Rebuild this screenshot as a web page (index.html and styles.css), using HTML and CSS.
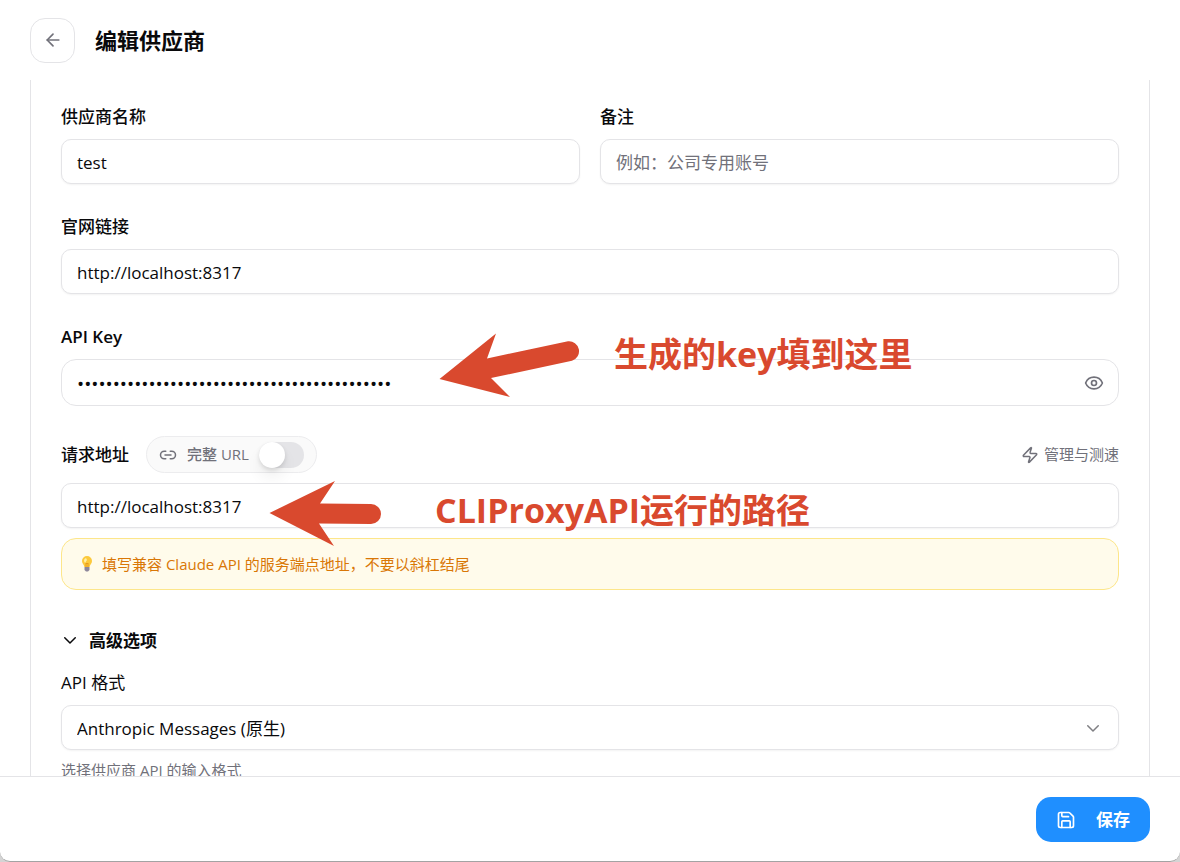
FILE: index.html
```html
<!DOCTYPE html>
<html lang="zh-CN">
<head>
    <meta charset="UTF-8">
    <meta name="viewport" content="width=device-width, initial-scale=1.0">
    <title>编辑供应商</title>
    <link rel="stylesheet" href="styles.css">
</head>
<body>

    <div class="window">
        <header class="header">
            <button type="button" class="btn-back" aria-label="返回">
                <svg class="icon" width="20" height="20" viewBox="0 0 24 24"><path d="m12 19-7-7 7-7"/><path d="M19 12H5"/></svg>
            </button>
            <h1>编辑供应商</h1>
        </header>

        <main class="content">
            <form class="card" id="provider-form">
                <div class="row">
                    <div class="field">
                        <label for="name">供应商名称</label>
                        <input class="input" type="text" id="name" value="test">
                    </div>
                    <div class="field">
                        <label for="notes">备注</label>
                        <input class="input" type="text" id="notes" placeholder="例如：公司专用账号">
                    </div>
                </div>

                <div class="field">
                    <label for="website">官网链接</label>
                    <input class="input" type="text" id="website" value="http://localhost:8317">
                </div>

                <div class="field">
                    <label class="strong" for="apikey">API Key</label>
                    <div class="control">
                        <input class="input input-key" type="password" id="apikey" value="sk-0123456789abcdefghijklmnopqrstuvwxyz01234">
                        <button type="button" class="btn-eye" aria-label="显示">
                            <svg class="icon" width="20" height="20" viewBox="0 0 24 24"><path d="M2.06 12.35a1 1 0 0 1 0-.7 10.75 10.75 0 0 1 19.88 0 1 1 0 0 1 0 .7 10.75 10.75 0 0 1-19.88 0"/><circle cx="12" cy="12" r="3"/></svg>
                        </button>
                        <svg class="arrow arrow-key" width="142" height="66" viewBox="0 0 142 66"><path d="M0.5 47 57 1.5 48 26.5 129 9.3A10 10 0 0 1 133 28.8L52 46 71 65Z"/></svg>
                        <span class="note note-key">生成的key填到这里</span>
                    </div>
                </div>

                <div class="field">
                    <div class="url-bar">
                        <label for="baseurl">请求地址</label>
                        <label class="pill">
                            <svg class="icon" width="18" height="18" viewBox="0 0 24 24"><path d="M9 17H7A5 5 0 0 1 7 7h2"/><path d="M15 7h2a5 5 0 1 1 0 10h-2"/><path d="M8 12h8"/></svg>
                            <span>完整 URL</span>
                            <input class="switch" type="checkbox">
                        </label>
                        <button type="button" class="btn-speed">
                            <svg class="icon" width="18" height="18" viewBox="0 0 24 24"><path d="M4 14a1 1 0 0 1-.78-1.63l9.9-10.2a.5.5 0 0 1 .86.46l-1.92 6.02A1 1 0 0 0 13 10h7a1 1 0 0 1 .78 1.63l-9.9 10.2a.5.5 0 0 1-.86-.46l1.92-6.02A1 1 0 0 0 11 14z"/></svg>
                            管理与测速
                        </button>
                    </div>
                    <div class="control">
                        <input class="input" type="text" id="baseurl" value="http://localhost:8317">
                        <svg class="arrow arrow-url" width="114" height="66" viewBox="0 0 114 66"><path d="M0.5 33 66 1 51 23.500 102 24A10 10 0 0 1 102 44L50 43.500 65 66Z"/></svg>
                        <span class="note note-url">CLIProxyAPI运行的路径</span>
                    </div>
                    <div class="tip">
                        <svg width="12" height="18" viewBox="0 0 12 18">
                            <path fill="#fcc93c" d="M6 1a5 5 0 0 0-5 5c0 2.600 2 3.500 2.400 6h5.200C9 9.500 11 8.600 11 6a5 5 0 0 0-5-5z"/>
                            <path fill="#fff0a8" d="M5 3a3 3 0 0 0-2 3l1 2 2-3z"/>
                            <path fill="none" stroke="#e89a1c" d="M5 12V8l1 1 1-1v4"/>
                            <path fill="#8d879b" d="M3.500 12h5v3L7 16.500H5L3.500 15z"/>
                        </svg>
                        <p>填写兼容 Claude API 的服务端点地址，不要以斜杠结尾</p>
                    </div>
                </div>

                <div class="advanced">
                    <button type="button" class="btn-advanced">
                        <svg class="icon" width="18" height="18" viewBox="0 0 24 24"><path d="m5 9 7 7 7-7"/></svg>
                        高级选项
                    </button>
                    <div class="field">
                        <label class="plain" for="format">API 格式</label>
                        <div class="control">
                            <select class="input" id="format">
                                <option>Anthropic Messages (原生)</option>
                            </select>
                            <svg class="icon chevron" width="18" height="18" viewBox="0 0 24 24"><path d="m5 9 7 7 7-7"/></svg>
                        </div>
                        <p class="hint">选择供应商 API 的输入格式</p>
                    </div>
                </div>
            </form>
        </main>

        <footer class="footer">
            <button type="submit" class="btn-save" form="provider-form">
                <svg class="icon" width="20" height="20" viewBox="0 0 24 24"><path d="M15.200 3a2 2 0 0 1 1.400.6l3.800 3.800a2 2 0 0 1 .6 1.400V19a2 2 0 0 1-2 2H5a2 2 0 0 1-2-2V5a2 2 0 0 1 2-2z"/><path d="M17 21v-7a1 1 0 0 0-1-1H8a1 1 0 0 0-1 1v7"/><path d="M7 3v4a1 1 0 0 0 1 1h7"/></svg>
                保存
            </button>
        </footer>
    </div>

</body>
</html>
```
FILE: styles.css
```css
* {
    margin: 0;
    padding: 0;
    box-sizing: border-box;
}
body {
    height: 100vh;
    background-color: #d4d4d4;
    font-family: "Open Sans", "Noto Sans CJK SC", sans-serif;
    font-size: 17px;
    line-height: 25px;
    color: #09090b;
}
button, input, select {
    font: inherit;
    color: inherit;
}
button {
    border: none;
    background: none;
    cursor: pointer;
}
.window {
    height: 100%;
    display: flex;
    flex-direction: column;
    background-color: #fff;
    border-bottom: 1px solid #a3a3a3;
    border-radius: 0 0 10px 10px;
    overflow: hidden;
}
.icon {
    flex-shrink: 0;
    fill: none;
    stroke: currentColor;
    stroke-width: 2;
    stroke-linecap: round;
    stroke-linejoin: round;
}

/* Header */
.header {
    height: 80px;
    flex-shrink: 0;
    display: flex;
    align-items: center;
    gap: 20px;
    padding: 0 30px;
}
.btn-back {
    width: 45px;
    height: 45px;
    display: flex;
    align-items: center;
    justify-content: center;
    border: 1px solid #e4e4e7;
    border-radius: 15px;
    color: #71717a;
}
h1 {
    font-size: 22px;
    line-height: 30px;
    font-weight: bold;
}

/* Form */
.content {
    flex: 1;
    min-height: 0;
    overflow: hidden;
    padding: 0 30px;
}
.card {
    display: flex;
    flex-direction: column;
    gap: 30px;
    padding: 24px 30px;
    border: 1px solid #e4e4e7;
    border-top: none;
}
.row {
    display: grid;
    grid-template-columns: 1fr 1fr;
    gap: 20px;
}
.field {
    display: flex;
    flex-direction: column;
    gap: 10px;
}
label {
    font-weight: 500;
}
.strong {
    font-weight: 600;
}
.plain {
    font-weight: normal;
}
.input {
    display: block;
    width: 100%;
    height: 45px;
    padding: 2px 15px 0;
    border: 1px solid #e4e4e7;
    border-radius: 10px;
    background-color: #fff;
    box-shadow: 0 1px 2px rgba(0, 0, 0, 0.05);
    outline: none;
    appearance: none;
}
.input::placeholder {
    color: #71717a;
}
.input-key {
    height: 47px;
    border-radius: 15px;
    box-shadow: none;
    font-size: 19px;
}
.control {
    position: relative;
}
.btn-eye {
    position: absolute;
    top: 0;
    right: 15px;
    height: 100%;
    display: flex;
    align-items: center;
    color: #71717a;
}
.chevron {
    position: absolute;
    top: 14px;
    right: 17px;
    color: #7f7f83;
    pointer-events: none;
}
.url-bar {
    display: flex;
    align-items: center;
    gap: 17px;
}
.pill {
    height: 37px;
    display: flex;
    align-items: center;
    gap: 10px;
    padding: 0 12px;
    border: 1px solid #ececee;
    border-radius: 19px;
    background-color: #fafafa;
    font-size: 15px;
    color: #71717a;
}
.switch {
    width: 45px;
    height: 26px;
    display: flex;
    align-items: center;
    border-radius: 13px;
    background-color: #e4e4e7;
    appearance: none;
    cursor: pointer;
}
.switch::before {
    content: "";
    width: 26px;
    height: 26px;
    border-radius: 50%;
    background-color: #fff;
    box-shadow: 0 10px 15px rgba(0, 0, 0, 0.06), 0 2px 4px rgba(0, 0, 0, 0.12);
}
.switch:checked {
    justify-content: flex-end;
    background-color: #1f8fff;
}
.btn-speed {
    display: flex;
    align-items: center;
    gap: 5px;
    margin-left: auto;
    font-size: 15px;
    color: #71717a;
}
.tip {
    height: 52px;
    display: flex;
    align-items: center;
    gap: 9px;
    padding: 0 19px;
    border: 1px solid #fde68a;
    border-radius: 15px;
    background-color: #fffbeb;
    font-size: 15px;
    color: #d97706;
}
.advanced {
    display: flex;
    flex-direction: column;
    gap: 10px;
}
.btn-advanced {
    height: 40px;
    display: flex;
    align-items: center;
    gap: 10px;
    font-weight: 600;
}
.hint {
    font-size: 15px;
    line-height: 20px;
    color: #71717a;
}

/* Callouts over the form */
.arrow, .note {
    position: absolute;
    z-index: 1;
    pointer-events: none;
}
.arrow {
    fill: #d9492e;
}
.arrow-key {
    left: 378px;
    top: -27px;
}
.arrow-url {
    left: 208px;
    top: -3px;
}
.note {
    font-size: 34px;
    line-height: 50px;
    font-weight: bold;
    white-space: nowrap;
    color: #d9492e;
    text-shadow: 0 0 2px #fff;
}
.note-key {
    left: 553px;
    top: -30px;
}
.note-url {
    left: 374px;
    top: 2px;
}

/* Footer */
.footer {
    flex-shrink: 0;
    display: flex;
    justify-content: flex-end;
    padding: 20px 30px 19px;
    border-top: 1px solid #e4e4e7;
}
.btn-save {
    height: 45px;
    display: flex;
    align-items: center;
    gap: 20px;
    padding: 0 20px;
    border-radius: 15px;
    background-color: #1f8fff;
    font-weight: 600;
    color: #fff;
}
```
